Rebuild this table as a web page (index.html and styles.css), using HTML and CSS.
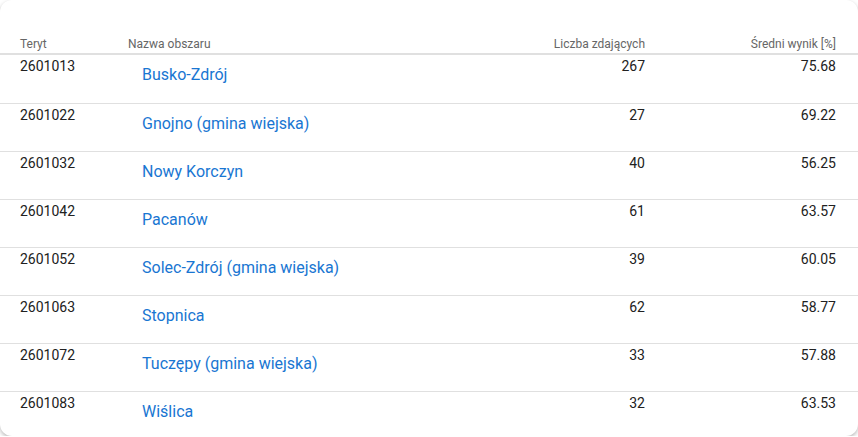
FILE: index.html
```html
<!DOCTYPE html>
<html lang="pl">
<head>
<meta charset="utf-8">
<title>Wyniki</title>
<link rel="stylesheet" href="styles.css">
</head>
<body>
<div class="card">
  <div class="row head">
    <div class="c">Teryt</div>
    <div class="c">Nazwa obszaru</div>
    <div class="c r">Liczba zdających</div>
    <div class="c r">Średni wynik [%]</div>
  </div>
  <div class="row first"><div class="c">2601013</div><div class="c"><a class="link" href="#">Busko-Zdrój</a></div><div class="c r">267</div><div class="c r">75.68</div></div>
  <div class="row"><div class="c">2601022</div><div class="c"><a class="link" href="#">Gnojno (gmina wiejska)</a></div><div class="c r">27</div><div class="c r">69.22</div></div>
  <div class="row"><div class="c">2601032</div><div class="c"><a class="link" href="#">Nowy Korczyn</a></div><div class="c r">40</div><div class="c r">56.25</div></div>
  <div class="row"><div class="c">2601042</div><div class="c"><a class="link" href="#">Pacanów</a></div><div class="c r">61</div><div class="c r">63.57</div></div>
  <div class="row"><div class="c">2601052</div><div class="c"><a class="link" href="#">Solec-Zdrój (gmina wiejska)</a></div><div class="c r">39</div><div class="c r">60.05</div></div>
  <div class="row"><div class="c">2601063</div><div class="c"><a class="link" href="#">Stopnica</a></div><div class="c r">62</div><div class="c r">58.77</div></div>
  <div class="row"><div class="c">2601072</div><div class="c"><a class="link" href="#">Tuczępy (gmina wiejska)</a></div><div class="c r">33</div><div class="c r">57.88</div></div>
  <div class="row"><div class="c">2601083</div><div class="c"><a class="link" href="#">Wiślica</a></div><div class="c r">32</div><div class="c r">63.53</div></div>
</div>
</body>
</html>
```
FILE: styles.css
```css
html, body {
  margin: 0;
  background: #ffffff;
}
body {
  font-family: Roboto, "Liberation Sans", sans-serif;
  color: #212121;
}
.card {
  height: 436px;
  overflow: hidden;
  background: #fff;
  border-radius: 12px;
  box-shadow: 0 2px 4px rgba(0,0,0,0.28);
}
.row {
  display: grid;
  grid-template-columns: 108px 1fr 160px 191px;
  padding: 0 22px 0 20px;
  height: 47px;
  border-bottom: 1px solid #e0e0e0;
  font-size: 14px;
  line-height: 18px;
}
.row.first {
  height: 48px;
}
.row .c {
  padding-top: 2px;
}
.row.head {
  height: 53px;
  border-bottom: 2px solid #e0e0e0;
  font-size: 12px;
  line-height: 16px;
  color: #666666;
}
.row.head .c {
  padding-top: 36px;
}
.r {
  text-align: right;
}
.link {
  display: inline-block;
  margin-top: 6px;
  padding: 0 14px;
  font-size: 16px;
  line-height: 24px;
  color: #1976d2;
  text-decoration: none;
}
```
